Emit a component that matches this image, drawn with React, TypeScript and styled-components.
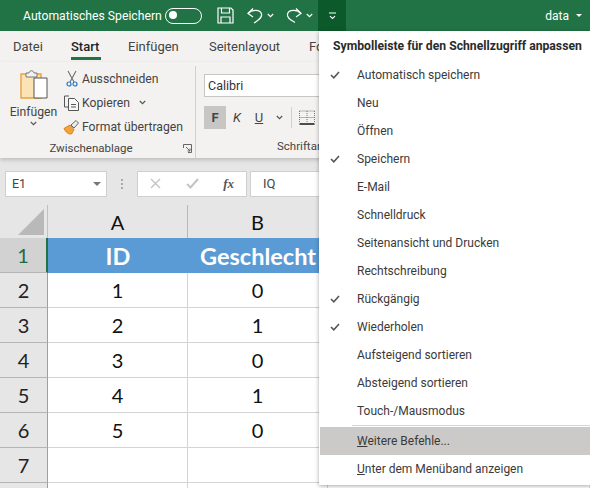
import React from 'react';
import styled, { createGlobalStyle } from 'styled-components';

const GlobalStyle = createGlobalStyle`
  html, body {
    margin: 0;
    padding: 0;
    background: #fff;
  }
  * {
    box-sizing: border-box;
  }
`;

const Page = styled.div`
  position: relative;
  width: 590px;
  height: 488px;
  overflow: hidden;
  font-family: Roboto, 'Noto Sans', sans-serif;
  color: #323130;
`;

const TitleBar = styled.div`
  display: flex;
  align-items: center;
  height: 31px;
  padding-left: 23px;
  background: #217346;
  color: #fff;
  font-size: 12.2px;
`;

const TitleLabel = styled.span`
  width: 142px;
  white-space: nowrap;
`;

const Toggle = styled.span`
  position: relative;
  display: block;
  width: 37px;
  height: 16px;
  margin-right: 15px;
  border: 1.3px solid #fff;
  border-radius: 8px;

  &::after {
    content: '';
    position: absolute;
    left: 3px;
    top: 2.5px;
    width: 8px;
    height: 8px;
    border-radius: 50%;
    background: #fff;
  }
`;

const QuickIcon = styled.span<{ $width: number }>`
  display: flex;
  align-items: center;
  gap: 4px;
  width: ${(p) => p.$width}px;
  height: 31px;
`;

const QuickMenuButton = styled.span`
  display: flex;
  align-items: center;
  justify-content: center;
  width: 28px;
  height: 31px;
  background: #0c5a2c;
`;

const FileName = styled.span`
  display: flex;
  align-items: center;
  gap: 7px;
  margin-left: auto;
  padding-right: 8px;
  font-size: 12px;
`;

const Caret = styled.span`
  width: 0;
  height: 0;
  border-left: 3px solid transparent;
  border-right: 3px solid transparent;
  border-top: 3px solid #fff;
`;

const Tabs = styled.div`
  display: flex;
  height: 31px;
  padding-left: 13px;
  background: #f3f2f1;
  font-size: 13px;
  white-space: nowrap;
`;

const Tab = styled.div<{ $active?: boolean; $width: number }>`
  position: relative;
  width: ${(p) => p.$width}px;
  padding-top: 8px;
  overflow: hidden;
  color: ${(p) => (p.$active ? '#1f1f1f' : '#444')};
  font-weight: ${(p) => (p.$active ? 500 : 400)};

  &::after {
    content: '';
    display: ${(p) => (p.$active ? 'block' : 'none')};
    position: absolute;
    left: 0;
    top: 26px;
    width: 30px;
    height: 3px;
    background: #217346;
  }
`;

const Ribbon = styled.div`
  display: flex;
  height: 96px;
  background: #f3f2f1;
  box-shadow: 0 2px 4px rgba(0, 0, 0, 0.18);
  position: relative;
`;

const ClipboardGroup = styled.div`
  display: grid;
  grid-template-columns: 59px 1fr;
  grid-template-rows: 1fr 18px;
  width: 196px;
  height: 92px;
  margin-top: 4px;
  padding-left: 4px;
  border-right: 1px solid #d2d0ce;
`;

const PasteButton = styled.div`
  display: flex;
  flex-direction: column;
  align-items: center;
  padding-top: 3px;
  font-size: 12.2px;
  color: #444;
`;

const PasteLabel = styled.span`
  margin-top: 3px;
  margin-bottom: 1px;
  line-height: 16px;
`;

const ClipboardActions = styled.div`
  display: flex;
  flex-direction: column;
  gap: 1px;
  padding-top: 1px;
`;

const Action = styled.div`
  display: flex;
  align-items: center;
  gap: 2px;
  height: 23px;
  font-size: 12.2px;
  color: #444;
  white-space: nowrap;
`;

const ActionIcon = styled.span`
  display: flex;
  justify-content: center;
  width: 17px;
`;

const ActionChevron = styled.span`
  display: flex;
  margin-left: 7px;
`;

const GroupFooter = styled.div`
  grid-column: 1 / 3;
  position: relative;
  display: flex;
  justify-content: center;
  padding-right: 17px;
  font-size: 11.5px;
  line-height: 16px;
  color: #444;
`;

const Launcher = styled.span`
  position: absolute;
  right: 3px;
  top: 4px;
  display: flex;
`;

const FontGroup = styled.div`
  display: flex;
  flex-direction: column;
  width: 123px;
  overflow: hidden;
  padding-left: 8px;
  padding-top: 12px;
`;

const FontBox = styled.div`
  flex: none;
  width: 130px;
  height: 23px;
  margin-bottom: 9px;
  padding: 2px 3px;
  border: 1px solid #c8c6c4;
  background: #fff;
  font-size: 12.5px;
  line-height: 17px;
  color: #333;
`;

const FontTools = styled.div`
  display: flex;
  align-items: center;
  height: 23px;
`;

const StyleButton = styled.span<{ $active?: boolean; $width?: number; $kind?: 'bold' | 'italic' | 'underline' }>`
  display: flex;
  align-items: center;
  justify-content: center;
  width: ${(p) => p.$width ?? 22}px;
  height: 23px;
  background: ${(p) => (p.$active ? '#c8c6c4' : 'transparent')};
  font-size: 13px;
  font-weight: ${(p) => (p.$kind === 'bold' ? 700 : 400)};
  font-style: ${(p) => (p.$kind === 'italic' ? 'italic' : 'normal')};
  text-decoration: ${(p) => (p.$kind === 'underline' ? 'underline' : 'none')};
  color: #444;
`;

const Divider = styled.span`
  width: 1px;
  height: 21px;
  margin: 0 7px 0 3px;
  background: #d2d0ce;
`;

const FontFooter = styled.div`
  margin-top: 9px;
  margin-left: 73px;
  font-size: 11.5px;
  line-height: 16px;
  color: #444;
  white-space: nowrap;
`;

const FormulaBar = styled.div`
  display: flex;
  align-items: center;
  height: 47px;
  padding: 4px 0 0 5px;
  background: #e6e6e6;
`;

const NameBox = styled.div`
  display: flex;
  align-items: center;
  justify-content: space-between;
  width: 102px;
  height: 26px;
  padding: 0 5px 0 6px;
  background: #fff;
  border: 1px solid #cfcfcf;
  font-size: 12.5px;
  color: #444;
`;

const NameCaret = styled.span`
  width: 0;
  height: 0;
  border-left: 4px solid transparent;
  border-right: 4px solid transparent;
  border-top: 4px solid #777;
`;

const Grip = styled.span`
  display: flex;
  flex-direction: column;
  gap: 2px;
  margin: 0 14px;
  width: 2px;

  i {
    display: block;
    width: 2px;
    height: 2px;
    background: #aaa;
  }
`;

const FormulaButtons = styled.div`
  display: flex;
  align-items: center;
  justify-content: space-between;
  width: 110px;
  height: 26px;
  padding: 0 12px;
  margin-right: 3px;
  background: #fff;
  border: 1px solid #cfcfcf;
`;

const FxLabel = styled.span`
  font-family: 'Liberation Serif', serif;
  font-style: italic;
  font-weight: 700;
  font-size: 13px;
  color: #555;
`;

const FormulaInput = styled.div`
  flex: 1;
  height: 26px;
  padding-left: 12px;
  background: #fff;
  border: 1px solid #cfcfcf;
  font-size: 13px;
  line-height: 24px;
  color: #444;
`;

const Sheet = styled.div`
  display: grid;
  grid-template-columns: 48px 140px 140px 1fr;
  grid-template-rows: 33px repeat(8, 35px);
  font-family: Lato, 'Noto Sans', sans-serif;
  background: #fff;
`;

const Corner = styled.div`
  position: relative;
  background: #e6e6e6;
  border-right: 1px solid #c0c0c0;

  &::after {
    content: '';
    position: absolute;
    right: 3px;
    bottom: 3px;
    width: 0;
    height: 0;
    border-left: 26px solid transparent;
    border-bottom: 26px solid #b9b9b9;
  }
`;

const ColHead = styled.div`
  display: flex;
  align-items: center;
  justify-content: center;
  background: #e6e6e6;
  border-right: 1px solid #b8b8b8;
  font-size: 20px;
  color: #111;
`;

const RowHead = styled.div<{ $active?: boolean }>`
  display: flex;
  align-items: center;
  justify-content: center;
  background: ${(p) => (p.$active ? '#d2d2d2' : '#e6e6e6')};
  border-right: ${(p) => (p.$active ? '2px solid #217346' : '1px solid #9f9f9f')};
  border-bottom: 1px solid #b5b5b5;
  font-size: 20px;
  color: ${(p) => (p.$active ? '#1f6a41' : '#222')};
`;

const Cell = styled.div<{ $header?: boolean }>`
  display: flex;
  align-items: center;
  justify-content: center;
  overflow: hidden;
  background: ${(p) => (p.$header ? '#5b9bd5' : '#fff')};
  border-right: ${(p) => (p.$header ? 'none' : '1px solid #d4d4d4')};
  border-bottom: ${(p) => (p.$header ? 'none' : '1px solid #d4d4d4')};
  color: ${(p) => (p.$header ? '#fff' : '#111')};
  font-size: ${(p) => (p.$header ? 23.5 : 20)}px;
  font-weight: ${(p) => (p.$header ? 700 : 400)};
  white-space: nowrap;
`;

const Menu = styled.div`
  position: absolute;
  left: 319px;
  top: 31px;
  width: 271px;
  padding-bottom: 2px;
  background: #fff;
  box-shadow: 0 1px 4px rgba(0, 0, 0, 0.35);
`;

const MenuTitle = styled.div`
  height: 30px;
  padding-left: 14px;
  font-size: 12.2px;
  font-weight: 700;
  line-height: 30px;
  color: #2b2b2b;
  white-space: nowrap;
`;

const MenuItem = styled.div<{ $hover?: boolean }>`
  display: flex;
  align-items: center;
  height: 28px;
  margin-left: 1px;
  background: ${(p) => (p.$hover ? '#cbcac8' : 'transparent')};
  font-size: 12px;
  color: #3b3a39;
  white-space: nowrap;
`;

const CheckSlot = styled.span`
  display: flex;
  align-items: center;
  justify-content: center;
  width: 37px;
  padding-right: 8px;
`;

const MenuSeparator = styled.div`
  height: 2px;
  margin-left: 33px;
  background: linear-gradient(#d6d6d6 1px, transparent 1px);
`;

const stroke = { fill: 'none', stroke: '#fff', strokeWidth: 1.2 };

const SaveIcon = () => (
  <svg width="17" height="17" viewBox="0 0 17 17" {...stroke}>
    <path d="M1 1h13l2 2v13H1z" />
    <path d="M4.500 1v5h8V1M4 16v-6h9v6" />
  </svg>
);

const UndoIcon = () => (
  <svg width="16" height="17" viewBox="0 0 16 17" {...stroke}>
    <path d="M6 1.500 1 6.500 6 10" />
    <path d="M1 6.500C4 3 13 1.500 14.500 7 15.500 11 11 13 7 16" />
  </svg>
);

const RedoIcon = () => (
  <svg width="16" height="17" viewBox="0 0 16 17" {...stroke}>
    <path d="M10 1.500l5 5-5 3.500" />
    <path d="M15 6.500C12 3 3 1.500 1.500 7 .5 11 5 13 9 15.500" />
  </svg>
);

const Chevron = ({ color = '#fff', width = 7 }: { color?: string; width?: number }) => (
  <svg width={width} height="5" viewBox="0 0 7 5" fill="none" stroke={color} strokeWidth="1.2">
    <path d="M.8 1 3.500 3.600 6.200 1" />
  </svg>
);

const QuickMenuIcon = () => (
  <svg width="9" height="8" viewBox="0 0 9 8" fill="none" stroke="#fff" strokeWidth="1.1">
    <path d="M1 1h7M2 4.200l2.500 2.300L7 4.200" />
  </svg>
);

const PasteIcon = () => (
  <svg width="28" height="32" viewBox="0 0 28 32" fill="none">
    <path d="M1 5h20v24H1z" fill="#fbe3b5" stroke="#e8a33d" strokeWidth="1.4" />
    <path d="M6 4h3c.5-3 4.500-3 5 0h3v4H6z" fill="#f3f2f1" stroke="#777" />
    <path d="M14 9h13v20H14z" fill="#fff" stroke="#555" />
  </svg>
);

const ScissorsIcon = () => (
  <svg width="12" height="17" viewBox="0 0 12 17" fill="none">
    <path d="M2 1l6 11M10 1 4 12" stroke="#6d6d6d" strokeWidth="1.1" />
    <circle cx="3" cy="14" r="2" stroke="#2b78c4" strokeWidth="1.2" />
    <circle cx="9" cy="14" r="2" stroke="#2b78c4" strokeWidth="1.2" />
  </svg>
);

const CopyIcon = () => (
  <svg width="17" height="16" viewBox="0 0 17 16" fill="none" stroke="#555">
    <path d="M6 1H1.500v11H5" />
    <path d="M5.500 3.500h6l4 4v8h-10z" fill="#f8f8f8" />
    <path d="M8 9.500h5M8 12h5" />
  </svg>
);

const BrushIcon = () => (
  <svg width="17" height="16" viewBox="0 0 17 16" fill="none">
    <path d="M1 9.500 7 6l4 4.500-2.500 4.500C5.500 15.500 2.500 13 1 9.500z" fill="#f2a33a" stroke="#d98218" />
    <path d="M8 6l5-4.500 2.500 2.500L11 9z" fill="#eee" stroke="#666" />
  </svg>
);

const LauncherIcon = () => (
  <svg width="9" height="9" viewBox="0 0 9 9" fill="none" stroke="#666">
    <path d="M.5 4V.5h8v8H5M3 3l4 4M7 4.500V7H4.500" />
  </svg>
);

const BordersIcon = () => (
  <svg width="16" height="16" viewBox="0 0 16 16" fill="none" stroke="#777" strokeDasharray="1 1">
    <path d="M.5 1h15M.5 7.500h15M8 1v11M.5 1v11M15.500 1v11" />
    <path d="M.5 14h15" stroke="#222" strokeWidth="1.6" strokeDasharray="none" />
  </svg>
);

const Check = () => (
  <svg width="10" height="8" viewBox="0 0 10 8" fill="none" stroke="#555" strokeWidth="1.6">
    <path d="M1 4l2.800 2.800L9 1" />
  </svg>
);

const CancelIcon = () => (
  <svg width="11" height="11" viewBox="0 0 11 11" fill="none" stroke="#c4c4c4" strokeWidth="1.4">
    <path d="M1 1l9 9M10 1l-9 9" />
  </svg>
);

const ConfirmIcon = () => (
  <svg width="13" height="11" viewBox="0 0 13 11" fill="none" stroke="#c4c4c4" strokeWidth="2">
    <path d="M1 6l3.500 3.500L12 1" />
  </svg>
);

const menuItems = [
  { label: 'Automatisch speichern', checked: true },
  { label: 'Neu' },
  { label: 'Öffnen' },
  { label: 'Speichern', checked: true },
  { label: 'E-Mail' },
  { label: 'Schnelldruck' },
  { label: 'Seitenansicht und Drucken' },
  { label: 'Rechtschreibung' },
  { label: 'Rückgängig', checked: true },
  { label: 'Wiederholen', checked: true },
  { label: 'Aufsteigend sortieren' },
  { label: 'Absteigend sortieren' },
  { label: 'Touch-/Mausmodus' },
];

const rows: [string, string][] = [
  ['1', '0'],
  ['2', '1'],
  ['3', '0'],
  ['4', '1'],
  ['5', '0'],
  ['', ''],
  ['', ''],
];

const App = (): JSX.Element => {
  return (
    <Page>
      <GlobalStyle />
      <TitleBar>
        <TitleLabel>Automatisches Speichern</TitleLabel>
        <Toggle />
        <QuickIcon $width={30}>
          <SaveIcon />
        </QuickIcon>
        <QuickIcon $width={39}>
          <UndoIcon />
          <Chevron />
        </QuickIcon>
        <QuickIcon $width={32}>
          <RedoIcon />
          <Chevron />
        </QuickIcon>
        <QuickMenuButton>
          <QuickMenuIcon />
        </QuickMenuButton>
        <FileName>
          data
          <Caret />
        </FileName>
      </TitleBar>

      <Tabs>
        <Tab $width={58}>Datei</Tab>
        <Tab $width={57} $active>
          Start
        </Tab>
        <Tab $width={81}>Einfügen</Tab>
        <Tab $width={100}>Seitenlayout</Tab>
        <Tab $width={10}>Formeln</Tab>
      </Tabs>

      <Ribbon>
        <ClipboardGroup>
          <PasteButton>
            <PasteIcon />
            <PasteLabel>Einfügen</PasteLabel>
            <Chevron color="#555" />
          </PasteButton>
          <ClipboardActions>
            <Action>
              <ActionIcon>
                <ScissorsIcon />
              </ActionIcon>
              Ausschneiden
            </Action>
            <Action>
              <ActionIcon>
                <CopyIcon />
              </ActionIcon>
              Kopieren
              <ActionChevron>
                <Chevron color="#555" />
              </ActionChevron>
            </Action>
            <Action>
              <ActionIcon>
                <BrushIcon />
              </ActionIcon>
              Format übertragen
            </Action>
          </ClipboardActions>
          <GroupFooter>
            Zwischenablage
            <Launcher>
              <LauncherIcon />
            </Launcher>
          </GroupFooter>
        </ClipboardGroup>

        <FontGroup>
          <FontBox>Calibri</FontBox>
          <FontTools>
            <StyleButton $active $kind="bold">
              F
            </StyleButton>
            <StyleButton $kind="italic">K</StyleButton>
            <StyleButton $kind="underline">U</StyleButton>
            <StyleButton $width={18}>
              <Chevron color="#555" />
            </StyleButton>
            <Divider />
            <BordersIcon />
          </FontTools>
          <FontFooter>Schriftart</FontFooter>
        </FontGroup>
      </Ribbon>

      <FormulaBar>
        <NameBox>
          E1
          <NameCaret />
        </NameBox>
        <Grip>
          <i />
          <i />
          <i />
        </Grip>
        <FormulaButtons>
          <CancelIcon />
          <ConfirmIcon />
          <FxLabel>fx</FxLabel>
        </FormulaButtons>
        <FormulaInput>IQ</FormulaInput>
      </FormulaBar>

      <Sheet>
        <Corner />
        <ColHead>A</ColHead>
        <ColHead>B</ColHead>
        <ColHead />

        <RowHead $active>1</RowHead>
        <Cell $header>ID</Cell>
        <Cell $header>Geschlecht</Cell>
        <Cell $header />

        {rows.map(([a, b], index) => (
          <React.Fragment key={index}>
            <RowHead>{index < 6 ? index + 2 : ''}</RowHead>
            <Cell>{a}</Cell>
            <Cell>{b}</Cell>
            <Cell />
          </React.Fragment>
        ))}
      </Sheet>

      <Menu>
        <MenuTitle>Symbolleiste für den Schnellzugriff anpassen</MenuTitle>
        {menuItems.map((item) => (
          <MenuItem key={item.label}>
            <CheckSlot>{item.checked && <Check />}</CheckSlot>
            {item.label}
          </MenuItem>
        ))}
        <MenuSeparator />
        <MenuItem $hover>
          <CheckSlot />
          <span>
            <u>W</u>eitere Befehle...
          </span>
        </MenuItem>
        <MenuItem>
          <CheckSlot />
          <span>
            <u>U</u>nter dem Menüband anzeigen
          </span>
        </MenuItem>
      </Menu>
    </Page>
  );
};

export default App;
